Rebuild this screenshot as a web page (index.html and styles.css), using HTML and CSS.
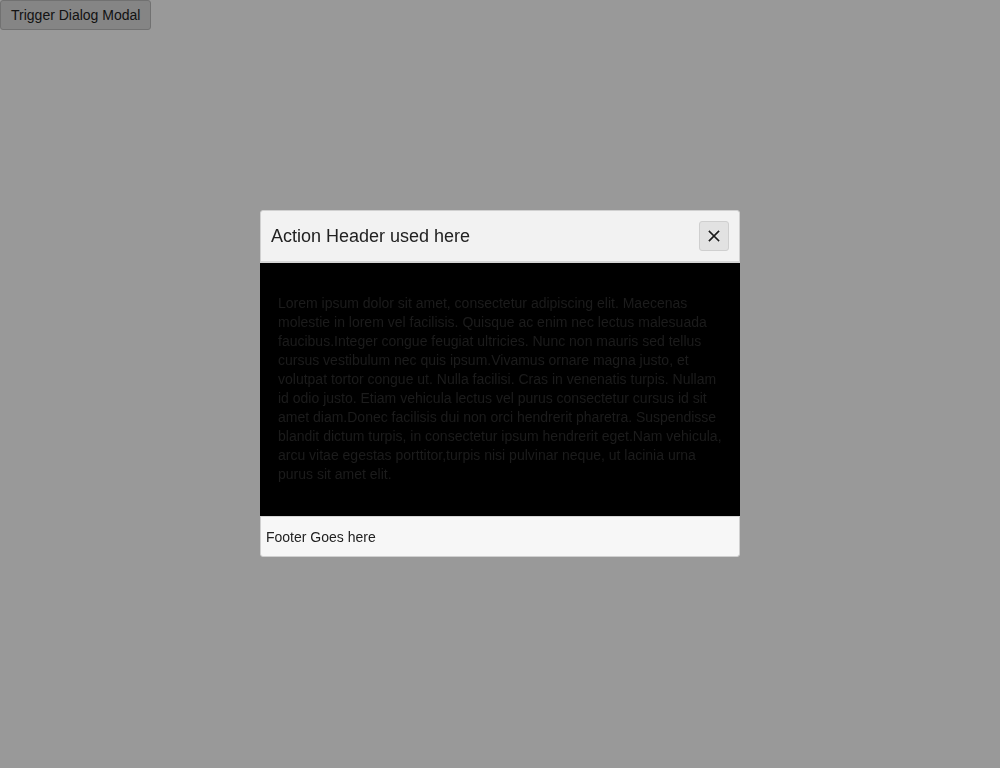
FILE: index.html
```html
<!DOCTYPE html>
<html lang="en">
<head>
<meta charset="utf-8">
<title>Dialog Modal</title>
<link rel="stylesheet" href="styles.css">
</head>
<body>
<button class="trigger" type="button">Trigger Dialog Modal</button>
<div class="overlay">
  <div class="dialog" role="dialog" aria-labelledby="dlg-title">
    <div class="dialog-header">
      <h2 class="dialog-title" id="dlg-title">Action Header used here</h2>
      <button class="close-btn" type="button" aria-label="Close">
        <svg width="14" height="14" viewBox="0 0 14 14" aria-hidden="true"><path d="M2.5 2.5 L11.5 11.5 M11.5 2.5 L2.5 11.5" stroke="#1a1a1a" stroke-width="1.7" stroke-linecap="square"/></svg>
      </button>
    </div>
    <div class="dialog-body">
      <p>Lorem ipsum dolor sit amet, consectetur adipiscing elit. Maecenas molestie in lorem vel facilisis. Quisque ac enim nec lectus malesuada faucibus.Integer congue feugiat ultricies. Nunc non mauris sed tellus cursus vestibulum nec quis ipsum.Vivamus ornare magna justo, et volutpat tortor congue ut. Nulla facilisi. Cras in venenatis turpis. Nullam id odio justo. Etiam vehicula lectus vel purus consectetur cursus id sit amet diam.Donec facilisis dui non orci hendrerit pharetra. Suspendisse blandit dictum turpis, in consectetur ipsum hendrerit eget.Nam vehicula, arcu vitae egestas porttitor,turpis nisi pulvinar neque, ut lacinia urna purus sit amet elit.</p>
    </div>
    <div class="dialog-footer">Footer Goes here</div>
  </div>
</div>
</body>
</html>
```
FILE: styles.css
```css
html, body {
  margin: 0;
  padding: 0;
  height: 100%;
  background: #ffffff;
  font-family: "Liberation Sans", Arial, sans-serif;
}

.trigger {
  display: block;
  margin: 0;
  height: 30px;
  padding: 0 10px;
  font-family: "Liberation Sans", Arial, sans-serif;
  font-size: 14px;
  color: #222;
  background: #dedede;
  border: 1px solid #bdbdbd;
  border-radius: 3px;
}

.overlay {
  position: fixed;
  inset: 0;
  background: rgba(0, 0, 0, 0.4);
  display: flex;
  align-items: flex-start;
  justify-content: center;
  padding-top: 210px;
}

.dialog {
  width: 480px;
  border-radius: 3px;
  overflow: hidden;
}

.dialog-header {
  display: flex;
  align-items: center;
  justify-content: space-between;
  padding: 10px 10px 10px 10px;
  background: #f2f2f2;
  border: 1px solid #d0d0d0;
  border-bottom: 2px solid #d6d6d6;
  border-radius: 3px 3px 0 0;
}

.dialog-title {
  margin: 0;
  font-size: 18px;
  font-weight: normal;
  color: #222;
}

.close-btn {
  width: 30px;
  height: 30px;
  padding: 0;
  display: flex;
  align-items: center;
  justify-content: center;
  background: #e2e2e2;
  border: 1px solid #cfcfcf;
  border-radius: 3px;
}

.dialog-body {
  background: #000000;
  padding: 17px 14px 18px 18px;
}

.dialog-body p {
  margin: 14px 0;
  font-size: 14px;
  line-height: 19px;
  color: #1c1c1c;
}

.dialog-footer {
  background: #f7f7f7;
  border: 1px solid #d0d0d0;
  border-top: 1px solid #d6d6d6;
  border-radius: 0 0 3px 3px;
  padding: 11px 5px 9px;
  font-size: 14px;
  line-height: 19px;
  color: #222;
}
```
